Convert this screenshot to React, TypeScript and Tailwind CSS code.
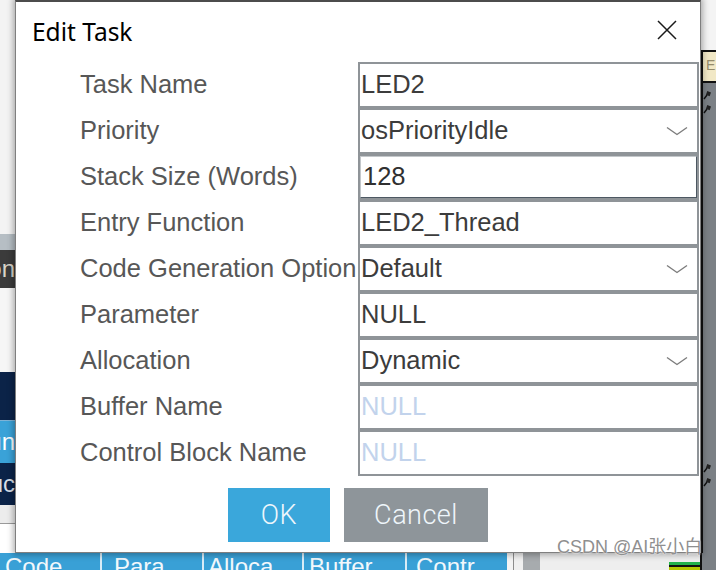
type Row = {
  label: string;
  value: string;
  kind: "text" | "select" | "focus" | "placeholder";
};

const rows: Row[] = [
  { label: "Task Name", value: "LED2", kind: "text" },
  { label: "Priority", value: "osPriorityIdle", kind: "select" },
  { label: "Stack Size (Words)", value: "128", kind: "focus" },
  { label: "Entry Function", value: "LED2_Thread", kind: "text" },
  { label: "Code Generation Option", value: "Default", kind: "select" },
  { label: "Parameter", value: "NULL", kind: "text" },
  { label: "Allocation", value: "Dynamic", kind: "select" },
  { label: "Buffer Name", value: "NULL", kind: "placeholder" },
  { label: "Control Block Name", value: "NULL", kind: "placeholder" },
];

function Chevron() {
  return (
    <svg width="22" height="10" viewBox="0 0 22 10" fill="none">
      <polyline points="1,1.5 11,8.5 21,1.5" stroke="#7c7c7c" strokeWidth="1.4" />
    </svg>
  );
}

function Pin() {
  return (
    <svg width="8" height="9" viewBox="0 0 8 9">
      <path d="M1 8 L4 4" stroke="#111" strokeWidth="1.4" />
      <rect x="3.5" y="0.5" width="4" height="4" fill="#222" transform="rotate(20 5 2.5)" />
    </svg>
  );
}

function Field({ row }: { row: Row }) {
  if (row.kind === "focus") {
    return (
      <div className="h-[46px] border-2 border-[#8f9498] bg-white">
        <div className="h-full flex items-center pl-[2px] border border-t-[#c3c7ca] border-l-[#c3c7ca] border-r-[#4d5862] border-b-[#4d5862] text-[#303030]">
          {row.value}
        </div>
      </div>
    );
  }
  return (
    <div className="h-[46px] border-2 border-[#8f9498] bg-white flex items-center justify-between pl-px pr-[9px]">
      <span
        className={
          row.kind === "placeholder" ? "text-[#c2d3ec]" : "text-[#3c3c3c]"
        }
      >
        {row.value}
      </span>
      {row.kind === "select" && <Chevron />}
    </div>
  );
}

function LeftStrip() {
  return (
    <div className="w-[15px] flex flex-col font-['Liberation_Sans',Arial,sans-serif] text-[24px] leading-none">
      <div className="h-[234px] bg-[#f3f3f3]" />
      <div className="h-[16px] bg-[#b6bec4]" />
      <div className="h-[38px] bg-[#3b3b3b] flex items-center justify-end overflow-hidden whitespace-nowrap text-[#d8d4c8]">
        tion
      </div>
      <div className="h-[84px] bg-[#f6f6f6]" />
      <div className="h-[48px] bg-[#0b2348]" />
      <div className="h-px bg-[#7fb3d6]" />
      <div className="h-[42px] bg-[#3aa2d8] flex items-center justify-end overflow-hidden whitespace-nowrap text-white">
        Run
      </div>
      <div className="h-[42px] bg-[#0b2348] flex items-center justify-end overflow-hidden whitespace-nowrap text-[#d6dde6]">
        Duc
      </div>
      <div className="h-[19px] bg-[#ececec] border-b border-[#9a9a9a]" />
      <div className="flex-1 bg-white" />
    </div>
  );
}

function RightStrip() {
  return (
    <div className="w-[15px] flex flex-col">
      <div className="h-[50px] bg-[#f4f4f4]" />
      <div className="flex-1 flex">
        <div className="w-[2px] bg-[#111]" />
        <div className="flex-1 flex flex-col">
          <div className="h-[33px] border-y-2 border-[#111] bg-[#f1e8c6] overflow-hidden pl-[3px] pt-[6px] text-[14px] leading-none text-[#948b6c] font-['Liberation_Sans',Arial,sans-serif]">
            E
          </div>
          <div className="flex-1 bg-[#7b8085] flex flex-col">
            <div className="mt-[8px]">
              <Pin />
            </div>
            <div className="mt-[5px]">
              <Pin />
            </div>
            <div className="mt-[350px]">
              <Pin />
            </div>
            <div className="mt-[5px]">
              <Pin />
            </div>
          </div>
        </div>
      </div>
    </div>
  );
}

function BottomStrip() {
  const cols = [
    { text: "Code", w: "w-[100px]", pl: "pl-[5px]" },
    { text: "Para", w: "w-[102px]", pl: "pl-[12px]" },
    { text: "Alloca", w: "w-[100px]", pl: "pl-[4px]" },
    { text: "Buffer", w: "w-[103px]", pl: "pl-[5px]" },
    { text: "Contr", w: "w-[102px]", pl: "pl-[9px]" },
  ];
  return (
    <div className="h-[17px] flex overflow-hidden">
      <div className="w-[507px] flex bg-[#39a0d6] font-['Liberation_Sans',Arial,sans-serif] text-[24px] leading-none text-[#f2f8fc]">
        {cols.map((c, i) => (
          <div
            key={c.text}
            className={`${c.w} ${c.pl} pt-[2px] whitespace-nowrap overflow-hidden ${
              i > 0 ? "border-l-2 border-[#d9ecf7]" : ""
            }`}
          >
            {c.text}
          </div>
        ))}
      </div>
      <div className="w-[6px] bg-[#f4f4f4]" />
      <div className="w-px bg-[#8d8d8d]" />
      <div className="w-[9px] bg-[#f0f0f0]" />
      <div className="w-[17px] bg-[#a7abae]" />
      <div className="w-[129px] bg-[#eeeeee]" />
      <div className="w-[31px] flex flex-col">
        <div className="h-[9px] bg-[#eeeeee]" />
        <div className="h-[3px] bg-[#22b24c]" />
        <div className="h-[2px] bg-[#111]" />
        <div className="flex-1 bg-[#b4c800]" />
      </div>
      <div className="w-[2px] bg-[#111]" />
      <div className="flex-1 bg-[#7b8085]" />
    </div>
  );
}

export default function App() {
  return (
    <div className="relative w-[716px] h-[570px] overflow-hidden flex flex-col bg-[#f0f0f0]">
      <div className="h-[553px] flex">
        <LeftStrip />

        <div className="relative z-10 w-[686px] h-[553px] flex flex-col bg-white border-x border-b border-[#7f7f7f] border-t-2 border-t-[#4c4c4c] shadow-[0_0_6px_2px_rgba(0,0,0,0.3)]">
          <div className="h-[60px] flex items-start">
            <h2 className="pl-[16px] pt-[18px] font-['Noto_Sans','Open_Sans',sans-serif] text-[24.5px] leading-none text-black">
              Edit Task
            </h2>
            <button type="button" className="ml-auto mr-[23px] mt-[18px]">
              <svg width="20" height="20" viewBox="0 0 20 20">
                <path d="M1 1 L19 19 M19 1 L1 19" stroke="#1a1a1a" strokeWidth="1.5" />
              </svg>
            </button>
          </div>

          <div className="grid grid-cols-[278px_341px] pl-[64px] font-['Liberation_Sans',Arial,sans-serif] text-[25.5px] leading-none">
            {rows.map((r) => (
              <div key={r.label} className="contents">
                <div className="h-[46px] flex items-center whitespace-nowrap text-[#575757]">
                  {r.label}
                </div>
                <Field row={r} />
              </div>
            ))}
          </div>

          <div className="mt-[12px] flex justify-center gap-[14px] font-['Roboto',sans-serif] font-light text-[27px] leading-none tracking-[0.5px] text-[#eef6fb]">
            <button type="button" className="w-[102px] h-[54px] bg-[#3aa7db] flex items-center justify-center">
              OK
            </button>
            <button type="button" className="w-[144px] h-[54px] bg-[#8e959a] flex items-center justify-center">
              Cancel
            </button>
          </div>
        </div>

        <RightStrip />
      </div>

      <BottomStrip />

      <div className="absolute z-20 left-[557px] top-[538px] font-['Liberation_Sans','Noto_Sans_CJK_SC',sans-serif] text-[18px] leading-none text-[#8f8f8f] [text-shadow:0_0_2px_#ffffff,0_0_1px_#ffffff]">
        CSDN @AI张小白
      </div>
    </div>
  );
}
